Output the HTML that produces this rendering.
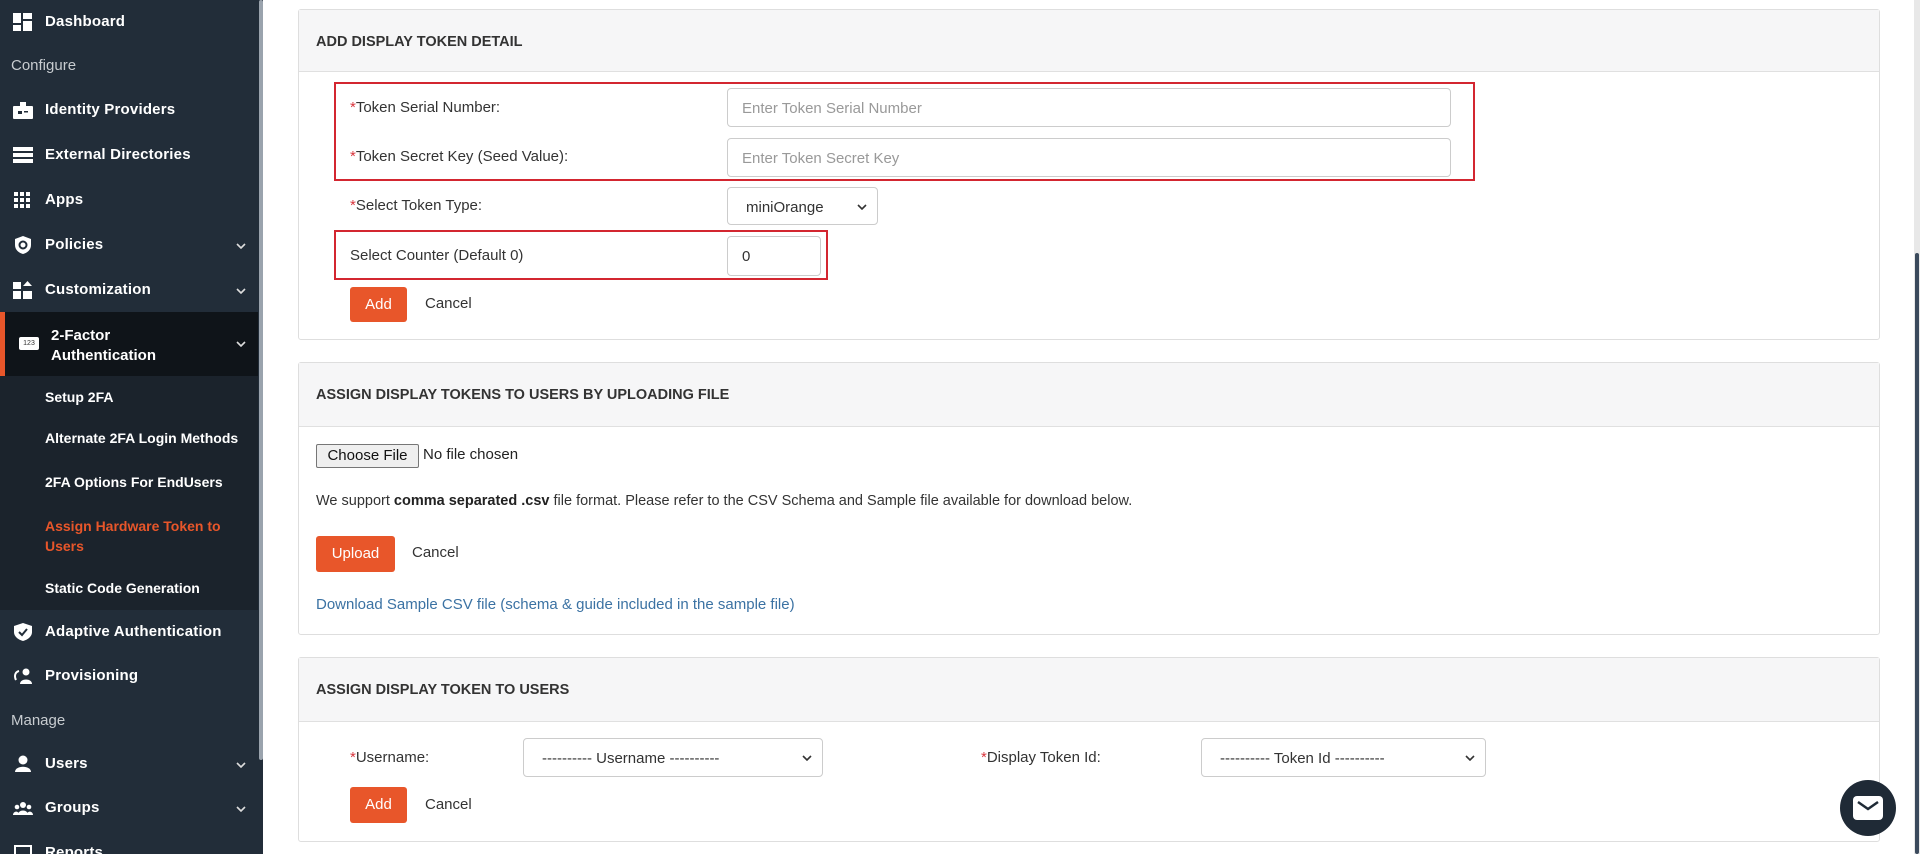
<!DOCTYPE html>
<html><head><meta charset="utf-8"><style>
*{box-sizing:border-box;margin:0;padding:0}
body{width:1920px;height:854px;overflow:hidden;background:#fff;font-family:"Liberation Sans",sans-serif;position:relative}
#sb{position:absolute;left:0;top:0;width:263px;height:854px;background:#222d39;color:#fff}
#sb .it{position:absolute;left:0;width:258px;font-size:15px;font-weight:bold;letter-spacing:.2px}
#sb .it .ic{position:absolute;left:13px;top:-9px;width:20px;height:18px}
#sb .it .tx{position:absolute;left:45px;top:-9px}
.chev{position:absolute;width:10px;height:6px}
#sb .sec{position:absolute;left:11px;font-size:15px;color:#c8ccd0}
#sb .sub{position:absolute;left:45px;font-size:14px;font-weight:bold;color:#fff}
.panel{position:absolute;left:298px;width:1582px;border:1px solid #dedede;border-radius:3px;background:#fff}
.ph{height:62px;background:#f6f6f7;border-bottom:1px solid #e0e0e0;padding:24px 0 0 17px;font-size:14.5px;font-weight:bold;color:#333}
.a{position:absolute;font-size:15px;color:#333;white-space:nowrap}
.a b{color:#d9363e;font-weight:normal}
.inp{position:absolute;border:1px solid #ccc;border-radius:4px;font-size:15px;color:#999;padding:11px 14px 0;background:#fff}
.btn{position:absolute;background:#e8562a;color:#fff;border-radius:3px;font-size:15px;text-align:center}
.red{position:absolute;border:2px solid #d32630}
</style></head><body>
<div id="sb">
 <div class="it" style="top:22px"><svg class="ic" viewBox="0 0 20 18"><rect x="0" y="0" width="8" height="10" fill="#fff"/><rect x="10" y="0" width="9" height="6" fill="#fff"/><rect x="0" y="12" width="8" height="6" fill="#fff"/><rect x="10" y="8" width="9" height="10" fill="#fff"/></svg><span class="tx">Dashboard</span></div>
 <div class="sec" style="top:57px">Configure</div>
 <div class="it" style="top:110px"><svg class="ic" viewBox="0 0 20 18"><rect x="7" y="1" width="6" height="5" fill="#fff"/><rect x="0" y="5" width="20" height="13" rx="1" fill="#fff"/><rect x="5" y="10" width="4" height="3" fill="#222d39"/><rect x="11" y="10" width="4" height="1.5" fill="#222d39"/></svg><span class="tx">Identity Providers</span></div>
 <div class="it" style="top:155px"><svg class="ic" viewBox="0 0 20 18"><rect x="0" y="1" width="20" height="4" fill="#fff"/><rect x="0" y="7" width="20" height="4" fill="#fff"/><rect x="0" y="13" width="20" height="4" fill="#fff"/></svg><span class="tx">External Directories</span></div>
 <div class="it" style="top:200px"><svg class="ic" viewBox="0 0 20 18"><g fill="#fff"><rect x="1" y="1" width="4" height="4"/><rect x="7" y="1" width="4" height="4"/><rect x="13" y="1" width="4" height="4"/><rect x="1" y="7" width="4" height="4"/><rect x="7" y="7" width="4" height="4"/><rect x="13" y="7" width="4" height="4"/><rect x="1" y="13" width="4" height="4"/><rect x="7" y="13" width="4" height="4"/><rect x="13" y="13" width="4" height="4"/></g></svg><span class="tx">Apps</span></div>
 <div class="it" style="top:245px"><svg class="ic" viewBox="0 0 20 18"><path d="M10 0 L18 3 V9 C18 14 14 17 10 18 C6 17 2 14 2 9 V3Z" fill="#fff"/><circle cx="10" cy="9" r="3.5" fill="none" stroke="#222d39" stroke-width="2"/></svg><span class="tx">Policies</span></div>
 <div class="it" style="top:290px"><svg class="ic" viewBox="0 0 20 18"><rect x="0" y="1" width="8" height="7" fill="#fff"/><rect x="0" y="10" width="8" height="8" fill="#fff"/><rect x="10" y="10" width="9" height="8" fill="#fff"/><path d="M14.5 0 L19 5 H10Z" fill="#fff"/></svg><span class="tx">Customization</span></div>
 <div style="position:absolute;left:0;top:312px;width:258px;height:64px;background:#0f1419"></div>
 <div style="position:absolute;left:0;top:312px;width:5px;height:64px;background:#e8562a"></div>
 <div style="position:absolute;left:19px;top:337px;width:20px;height:13px;background:#fff;border-radius:2px;font-size:7px;color:#333;text-align:center;line-height:13px">123</div>
 <div style="position:absolute;left:51px;top:326px;font-size:15px;font-weight:bold;line-height:20px">2-Factor<br>Authentication</div>
 <div style="position:absolute;left:0;top:376px;width:258px;height:234px;background:#1b232c"></div>
 <div class="sub" style="top:389px">Setup 2FA</div>
 <div class="sub" style="top:430px">Alternate 2FA Login Methods</div>
 <div class="sub" style="top:474px">2FA Options For EndUsers</div>
 <div class="sub" style="top:516px;color:#e8562a;line-height:20px">Assign Hardware Token to<br>Users</div>
 <div class="sub" style="top:580px">Static Code Generation</div>
 <div class="it" style="top:632px"><svg class="ic" viewBox="0 0 20 18"><path d="M10 0 L19 3 V9 C19 14 14 17 10 18 C6 17 1 14 1 9 V3Z" fill="#fff"/><path d="M6 9 L9 12 L14 6" fill="none" stroke="#222d39" stroke-width="2"/></svg><span class="tx">Adaptive Authentication</span></div>
 <div class="it" style="top:676px"><svg class="ic" viewBox="0 0 20 18"><circle cx="13" cy="5" r="3.5" fill="#fff"/><path d="M7 17 C7 11 19 11 19 17Z" fill="#fff"/><path d="M6 4 C2 5 1 9 3 13" fill="none" stroke="#fff" stroke-width="2"/></svg><span class="tx">Provisioning</span></div>
 <div class="sec" style="top:712px">Manage</div>
 <div class="it" style="top:764px"><svg class="ic" viewBox="0 0 20 18"><circle cx="10" cy="5" r="4.5" fill="#fff"/><path d="M2 17 C2 10 18 10 18 17Z" fill="#fff"/></svg><span class="tx">Users</span></div>
 <div class="it" style="top:808px"><svg class="ic" viewBox="0 0 20 18"><circle cx="10" cy="6" r="3" fill="#fff"/><circle cx="4" cy="8" r="2.3" fill="#fff"/><circle cx="16" cy="8" r="2.3" fill="#fff"/><path d="M5 16 C5 10 15 10 15 16Z M0 16 C0 12 6 11 6 16Z M14 16 C14 11 20 12 20 16Z" fill="#fff"/></svg><span class="tx">Groups</span></div>
 <div class="it" style="top:853px"><svg class="ic" viewBox="0 0 20 18"><rect x="2" y="2" width="16" height="16" fill="none" stroke="#fff" stroke-width="2"/></svg><span class="tx">Reports</span></div>
 <svg class="chev" style="left:236px;top:243px" viewBox="0 0 10 6"><path d="M1 1 L5 5 L9 1" fill="none" stroke="#ddd" stroke-width="1.6"/></svg>
 <svg class="chev" style="left:236px;top:288px" viewBox="0 0 10 6"><path d="M1 1 L5 5 L9 1" fill="none" stroke="#ddd" stroke-width="1.6"/></svg>
 <svg class="chev" style="left:236px;top:341px" viewBox="0 0 10 6"><path d="M1 1 L5 5 L9 1" fill="none" stroke="#ddd" stroke-width="1.6"/></svg>
 <svg class="chev" style="left:236px;top:762px" viewBox="0 0 10 6"><path d="M1 1 L5 5 L9 1" fill="none" stroke="#ddd" stroke-width="1.6"/></svg>
 <svg class="chev" style="left:236px;top:806px" viewBox="0 0 10 6"><path d="M1 1 L5 5 L9 1" fill="none" stroke="#ddd" stroke-width="1.6"/></svg>
 <div style="position:absolute;left:259px;top:0;width:4px;height:760px;background:#9aa3ad;border-radius:2px"></div>
</div>

<div class="panel" style="top:9px;height:331px">
 <div class="ph">ADD DISPLAY TOKEN DETAIL</div>
</div>
<div class="red" style="left:334px;top:82px;width:1141px;height:99px"></div>
<div class="a" style="left:350px;top:99px"><b>*</b>Token Serial Number:</div>
<div class="inp" style="left:727px;top:88px;width:724px;height:39px">Enter Token Serial Number</div>
<div class="a" style="left:350px;top:148px"><b>*</b>Token Secret Key (Seed Value):</div>
<div class="inp" style="left:727px;top:138px;width:724px;height:39px">Enter Token Secret Key</div>
<div class="a" style="left:350px;top:197px"><b>*</b>Select Token Type:</div>
<div class="inp" style="left:727px;top:187px;width:151px;height:38px;color:#333;padding-left:18px">miniOrange<svg class="chev" style="right:10px;top:16px" viewBox="0 0 10 6"><path d="M1 1 L5 5 L9 1" fill="none" stroke="#333" stroke-width="1.6"/></svg></div>
<div class="red" style="left:334px;top:230px;width:494px;height:50px"></div>
<div class="a" style="left:350px;top:247px">Select Counter (Default 0)</div>
<div class="inp" style="left:727px;top:236px;width:94px;height:40px;color:#333">0</div>
<div class="btn" style="left:350px;top:287px;width:57px;height:35px;line-height:35px">Add</div>
<div class="a" style="left:425px;top:295px">Cancel</div>

<div class="panel" style="top:362px;height:273px">
 <div class="ph" style="height:64px">ASSIGN DISPLAY TOKENS TO USERS BY UPLOADING FILE</div>
</div>
<div style="position:absolute;left:316px;top:444px;width:103px;height:24px;background:#efefef;border:1px solid #767676;border-radius:2px;font-size:15px;text-align:center;line-height:22px;color:#111">Choose File</div>
<div class="a" style="left:423px;top:446px;color:#222">No file chosen</div>
<div class="a" style="left:316px;top:493px;font-size:14.5px">We support <strong style="color:#222">comma separated .csv</strong> file format. Please refer to the CSV Schema and Sample file available for download below.</div>
<div class="btn" style="left:316px;top:536px;width:79px;height:36px;line-height:36px">Upload</div>
<div class="a" style="left:412px;top:544px">Cancel</div>
<div class="a" style="left:316px;top:596px;color:#3b72a3">Download Sample CSV file (schema &amp; guide included in the sample file)</div>

<div class="panel" style="top:657px;height:185px">
 <div class="ph" style="height:64px">ASSIGN DISPLAY TOKEN TO USERS</div>
</div>
<div class="a" style="left:350px;top:749px"><b>*</b>Username:</div>
<div class="inp" style="left:523px;top:738px;width:300px;height:39px;color:#333;padding-left:18px">---------- Username ----------<svg class="chev" style="right:10px;top:16px" viewBox="0 0 10 6"><path d="M1 1 L5 5 L9 1" fill="none" stroke="#333" stroke-width="1.6"/></svg></div>
<div class="a" style="left:981px;top:749px"><b>*</b>Display Token Id:</div>
<div class="inp" style="left:1201px;top:738px;width:285px;height:39px;color:#333;padding-left:18px">---------- Token Id ----------<svg class="chev" style="right:10px;top:16px" viewBox="0 0 10 6"><path d="M1 1 L5 5 L9 1" fill="none" stroke="#333" stroke-width="1.6"/></svg></div>
<div class="btn" style="left:350px;top:787px;width:57px;height:36px;line-height:36px">Add</div>
<div class="a" style="left:425px;top:796px">Cancel</div>

<div style="position:absolute;left:1840px;top:780px;width:56px;height:56px;border-radius:50%;background:#1f2a36"></div>
<svg style="position:absolute;left:1853px;top:796px" width="30" height="24" viewBox="0 0 30 24"><rect x="0" y="0" width="30" height="24" rx="4" fill="#fff"/><path d="M5 6 L15 13 L25 6" fill="none" stroke="#1f2a36" stroke-width="2.5"/></svg>
<div style="position:absolute;left:1914px;top:0;width:6px;height:854px;background:#e8e8e8"></div>
<div style="position:absolute;left:1915px;top:253px;width:4px;height:601px;background:#3b4a5c;border-radius:2px"></div>
</body></html>
